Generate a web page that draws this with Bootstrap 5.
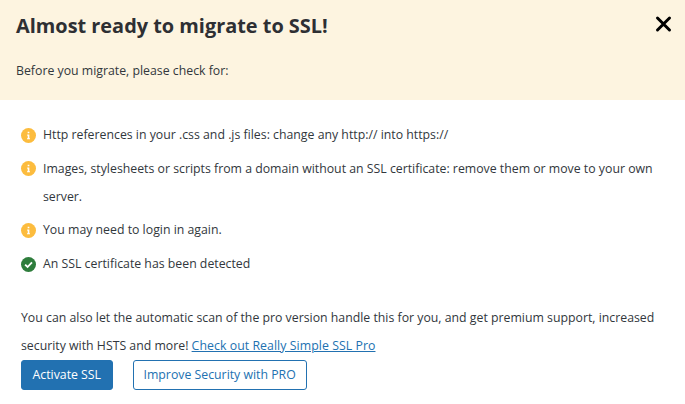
<!DOCTYPE html>
<html lang="en">
<head>
<meta charset="utf-8">
<title>Almost ready to migrate to SSL!</title>
<link href="https://cdn.jsdelivr.net/npm/bootstrap@5.3.0/dist/css/bootstrap.min.css" rel="stylesheet">
<style>
html,body{height:100%;overflow:hidden}
body{background:#fff;color:#32373c;font-family:"Open Sans","Noto Sans","Liberation Sans",sans-serif;font-size:12.3px;line-height:28px}
.ssl-head{background:#fdf4e0;height:100px;padding:0 16px 0 16px}
.ssl-title{font-size:19.9px;font-weight:700;line-height:26px;margin:0;padding-top:13px;color:#2e2f33}
.ssl-sub{margin:0;padding-top:18px;color:#32373c}
.ssl-close{top:14px;right:12px;width:20px;height:20px;background:none;border:0;padding:0;line-height:0}
.ssl-body{padding:21px 21px 0}
.ssl-list{margin:0 0 26px;padding:0}
.ssl-item{gap:7px;margin-bottom:5.7px}
.ssl-ico{flex:0 0 15px;width:15px;height:15px;margin-top:6.5px}
.ssl-para{margin:0}
.ssl-para a{color:#2271b1;letter-spacing:.06px}
.ssl-btn{font-size:12.3px;line-height:28px;height:30px;padding:0 10px;border-radius:3px;border:1px solid #2271b1}
.ssl-primary{background:#2271b1;color:#fff;padding:0 10.5px}
.ssl-outline{background:#fff;color:#2271b1}
.ssl-actions{gap:20px}
</style>
</head>
<body>
<div class="ssl-head position-relative">
  <h1 class="ssl-title">Almost ready to migrate to SSL!</h1>
  <p class="ssl-sub">Before you migrate, please check for:</p>
  <button class="ssl-close position-absolute" type="button" aria-label="Close">
    <svg width="20" height="20" viewBox="0 0 20 20"><path d="M4.5 4L16.5 16M16.5 4L4.5 16" stroke="#000" stroke-width="3" stroke-linecap="round" fill="none"/></svg>
  </button>
</div>
<div class="ssl-body">
  <ul class="ssl-list list-unstyled">
    <li class="ssl-item d-flex">
      <svg class="ssl-ico" viewBox="0 0 16 16"><circle cx="8" cy="8" r="8" fill="#fcbc3e"/><path d="M7.1 4h1.8v1.7H7.1zM6.6 7h2.3v3.9h.7v1.2H6.4v-1.2h.8V8.2h-.6z" fill="#fff"/></svg>
      <span>Http references in your .css and .js files: change any http:// into https://</span>
    </li>
    <li class="ssl-item d-flex">
      <svg class="ssl-ico" viewBox="0 0 16 16"><circle cx="8" cy="8" r="8" fill="#fcbc3e"/><path d="M7.1 4h1.8v1.7H7.1zM6.6 7h2.3v3.9h.7v1.2H6.4v-1.2h.8V8.2h-.6z" fill="#fff"/></svg>
      <span>Images, stylesheets or scripts from a domain without an SSL certificate: remove them or move to your own server.</span>
    </li>
    <li class="ssl-item d-flex">
      <svg class="ssl-ico" viewBox="0 0 16 16"><circle cx="8" cy="8" r="8" fill="#fcbc3e"/><path d="M7.1 4h1.8v1.7H7.1zM6.6 7h2.3v3.9h.7v1.2H6.4v-1.2h.8V8.2h-.6z" fill="#fff"/></svg>
      <span>You may need to login in again.</span>
    </li>
    <li class="ssl-item d-flex">
      <svg class="ssl-ico" viewBox="0 0 16 16"><circle cx="8" cy="8" r="8" fill="#2e7d3c"/><path d="M4.4 8.2l2.6 2.5 4.7-4.9" stroke="#fff" stroke-width="2" fill="none"/></svg>
      <span>An SSL certificate has been detected</span>
    </li>
  </ul>
  <p class="ssl-para">You can also let the automatic scan of the pro version handle this for you, and get premium support, increased security with HSTS and more! <a href="#">Check out Really Simple SSL Pro</a></p>
  <div class="ssl-actions d-flex">
    <a class="btn ssl-btn ssl-primary" href="#">Activate SSL</a>
    <a class="btn ssl-btn ssl-outline" href="#">Improve Security with PRO</a>
  </div>
</div>
<script src="https://cdn.jsdelivr.net/npm/bootstrap@5.3.0/dist/js/bootstrap.bundle.min.js"></script>
</body>
</html>
